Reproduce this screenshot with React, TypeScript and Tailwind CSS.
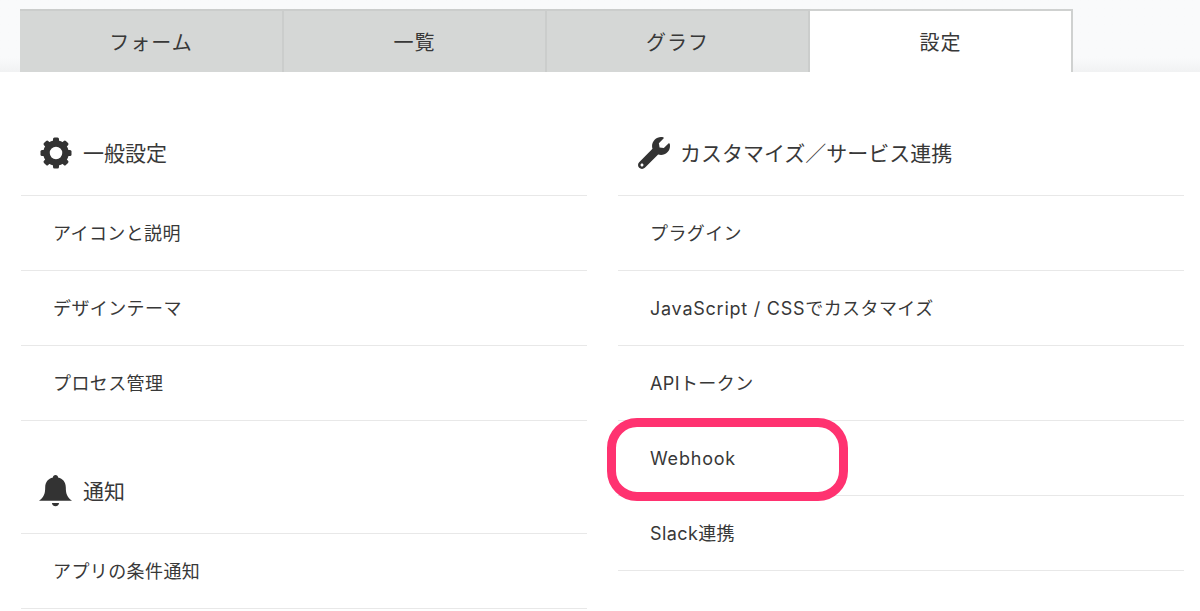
import { FaWrench } from "react-icons/fa";

const font = "font-['Inter','Noto_Sans_CJK_JP',sans-serif]";

const tabs = [
  { label: "フォーム", width: "w-[264px]" },
  { label: "一覧", width: "w-[263px]" },
  { label: "グラフ", width: "w-[263px]" },
  { label: "設定", width: "w-[263px]", active: true },
];

const GearIcon = () => (
  <svg viewBox="0 0 34 34" className="w-[34px] h-[34px] text-[#333]" fill="currentColor">
    {[0, 45, 90, 135, 180, 225, 270, 315].map(a => (
      <rect key={a} x="14" y="1.5" width="6" height="7" rx="1.5" transform={`rotate(${a} 17 17)`} />
    ))}
    <circle cx="17" cy="17" r="9.5" fill="none" stroke="currentColor" strokeWidth="6.5" />
  </svg>
);

const BellIcon = () => (
  <svg viewBox="0 0 32 31" className="w-[33px] h-[33px] -mt-[2px] text-[#333]" fill="currentColor">
    <path d="M16 .5C17.5 .5 18.5 1.5 18.5 3C23 4 26 7.5 26 12.5C26 19 27.5 22 32 25.5L0 25.5C4.5 22 6 19 6 12.5C6 7.5 9 4 13.5 3C13.5 1.5 14.5 .5 16 .5Z" />
    <path d="M12.5 27.5h7c-.4 2-1.8 3.2-3.5 3.2s-3.1-1.2-3.5-3.2Z" />
  </svg>
);

const Row = ({ label, children }: { label: React.ReactNode; children?: React.ReactNode }) => (
  <li className="relative h-[75px] border-b border-[#e8e8e8] flex items-center pl-8 text-[18px] tracking-[0.4px] text-[#383838]">
    <span>{label}</span>
    {children}
  </li>
);

const Heading = ({ icon, label, height }: { icon: React.ReactNode; label: string; height: string }) => (
  <div className={`${height} flex items-end pb-[25px] border-b border-[#e8e8e8] text-[21px] leading-[28px] text-[#383838]`}>
    <span className="w-[62px] h-[34px] pl-[7px] flex items-center justify-center shrink-0">{icon}</span>
    <span className="relative top-[-2px]">{label}</span>
  </div>
);

export default function App() {
  return (
    <div className={`${font} w-[1200px] h-[611px] overflow-hidden bg-white`}>
      <div className="h-[72px] pt-[9px] pl-5 bg-gradient-to-b from-[#f9fafb] from-80% to-[#f1f2f3] flex">
        {tabs.map(t => (
          <div
            key={t.label}
            className={`${t.width} h-[63px] pt-[2px] flex items-center justify-center text-[20px] tracking-[1px] text-[#383838] border-t-2 ${
              t.active
                ? "bg-white border-[#cfd1d0] border-r-2"
                : "bg-[#d5d7d6] border-[#cbcdcc] border-r-2"
            }`}
          >
            {t.label}
          </div>
        ))}
      </div>

      <div className="flex pl-[21px] gap-[31px]">
        <div className="w-[566px]">
          <Heading icon={<GearIcon />} label="一般設定" height="h-[124px]" />
          <ul>
            <Row label="アイコンと説明" />
            <Row label="デザインテーマ" />
            <Row label="プロセス管理" />
          </ul>
          <Heading icon={<BellIcon />} label="通知" height="h-[113px]" />
          <ul>
            <Row label="アプリの条件通知" />
          </ul>
        </div>

        <div className="w-[566px]">
          <Heading
            icon={<FaWrench className="w-[32px] h-[32px] ml-[2px] -mt-[1px] text-[#333]" />}
            label="カスタマイズ／サービス連携"
            height="h-[124px]"
          />
          <ul>
            <Row label="プラグイン" />
            <Row
              label={
                <>
                  <span className="tracking-[0.75px]">JavaScript / CSS</span>でカスタマイズ
                </>
              }
            />
            <Row label="APIトークン" />
            <Row label={<span className="tracking-[0.8px]">Webhook</span>}>
              <span className="absolute left-[-11px] top-[-3px] w-[241px] h-[83px] rounded-[30px] border-[9px] border-[#ff3270]" />
            </Row>
            <Row label="Slack連携" />
          </ul>
        </div>
      </div>
    </div>
  );
}
